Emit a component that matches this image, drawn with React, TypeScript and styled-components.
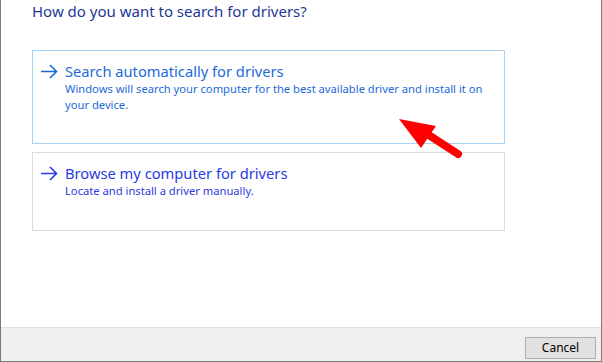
import React from "react";
import styled, { createGlobalStyle } from "styled-components";

const GlobalStyle = createGlobalStyle`
  html, body {
    margin: 0;
    padding: 0;
    background: #ffffff;
  }
  body {
    font-family: "Noto Sans", "Open Sans", Arial, sans-serif;
  }
`;

const Window = styled.div`
  position: relative;
  width: 602px;
  height: 362px;
  box-sizing: border-box;
  border-left: 1px solid #7a7a7a;
  border-right: 1px solid #7a7a7a;
  border-bottom: 1px solid #7a7a7a;
  background: #ffffff;
  display: flex;
  flex-direction: column;
  overflow: hidden;
`;

const Body = styled.div`
  flex: 1;
  padding: 0 96px 0 31px;
  display: flex;
  flex-direction: column;
`;

const Title = styled.h1`
  margin: 0;
  font-size: 15px;
  font-weight: 400;
  line-height: 22px;
  color: #1e3796;
  height: 50px;
`;

const Options = styled.div`
  display: flex;
  flex-direction: column;
  gap: 8px;
`;

const Option = styled.div<{ $hover?: boolean; $height: number }>`
  box-sizing: border-box;
  height: ${(p) => p.$height}px;
  border: 1px solid ${(p) => (p.$hover ? "#a9d3f5" : "#dcdcdc")};
  padding: 10px 4px 0 7px;
  display: flex;
  align-items: flex-start;
  gap: 7px;
  color: ${(p) => (p.$hover ? "#1c6ad8" : "#2a3be0")};
  cursor: default;
`;

const ArrowIcon = styled.svg`
  flex: none;
  width: 18px;
  height: 20px;
`;

const OptionText = styled.div`
  display: flex;
  flex-direction: column;
`;

const OptionHeading = styled.div`
  font-size: 14.7px;
  line-height: 20px;
`;

const OptionDesc = styled.div`
  font-size: 11.2px;
  line-height: 16px;
`;

const Footer = styled.div`
  height: 34px;
  box-sizing: border-box;
  border-top: 1px solid #dfdfdf;
  background: #f0f0f0;
  display: flex;
  justify-content: flex-end;
  align-items: flex-start;
  padding: 9px 5px 0 0;
`;

const Button = styled.button`
  width: 71px;
  height: 22px;
  box-sizing: border-box;
  border: 1px solid #adadad;
  background: #e1e1e1;
  font-family: "Noto Sans", "Open Sans", Arial, sans-serif;
  font-size: 12px;
  color: #000000;
  padding: 0;
  line-height: 18px;
`;

const Pointer = styled.svg`
  position: absolute;
  left: 390px;
  top: 110px;
  width: 80px;
  height: 55px;
  pointer-events: none;
`;

function Arrow() {
  return (
    <ArrowIcon viewBox="0 0 18 20">
      <path
        d="M1 10.5 H16.5 M10 4 L16.5 10.5 L10 17"
        fill="none"
        stroke="currentColor"
        strokeWidth="1.6"
      />
    </ArrowIcon>
  );
}

export default function App() {
  return (
    <>
      <GlobalStyle />
      <Window>
        <Body>
          <Title>How do you want to search for drivers?</Title>
          <Options>
            <Option $hover $height={94}>
              <Arrow />
              <OptionText>
                <OptionHeading>Search automatically for drivers</OptionHeading>
                <OptionDesc>
                  Windows will search your computer for the best available
                  driver and install it on your device.
                </OptionDesc>
              </OptionText>
            </Option>
            <Option $height={79}>
              <Arrow />
              <OptionText>
                <OptionHeading>Browse my computer for drivers</OptionHeading>
                <OptionDesc>Locate and install a driver manually.</OptionDesc>
              </OptionText>
            </Option>
          </Options>
        </Body>
        <Footer>
          <Button>Cancel</Button>
        </Footer>
        <Pointer viewBox="390 110 80 55">
          <line
            x1="457"
            y1="154"
            x2="420"
            y2="130"
            stroke="#ff0000"
            strokeWidth="8"
            strokeLinecap="round"
          />
          <polygon points="398,119 435,126 420,148" fill="#ff0000" />
        </Pointer>
      </Window>
    </>
  );
}
